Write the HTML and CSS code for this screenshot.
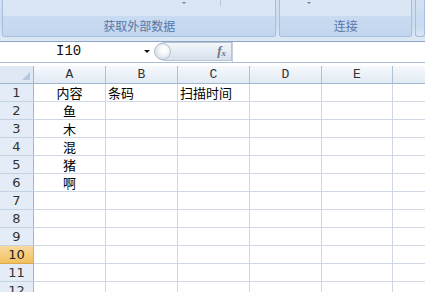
FILE: index.html
```html
<!DOCTYPE html>
<html>
<head>
    <link rel="stylesheet" href="styles.css">
</head>
<body>
    <div class="ribbon">
        <div class="group group-data">
            <div class="group-top">
                <span class="tiny-arrow arrow-1"></span>
                <span class="sep"></span>
            </div>
            <div class="group-label">获取外部数据</div>
        </div>
        <div class="group group-conn">
            <div class="group-top">
                <span class="tiny-arrow arrow-2"></span>
            </div>
            <div class="group-label">连接</div>
        </div>
        <div class="group group-next"></div>
    </div>

    <div class="fbar">
        <div class="namebox">
            <span class="cellref">I10</span>
            <span class="drop"></span>
        </div>
        <div class="fx-btn">
            <span class="knob"></span>
            <span class="fx">f<sub>x</sub></span>
        </div>
        <div class="formula"></div>
    </div>

    <div class="sheet heads">
        <div class="corner"><span class="tri"></span></div>
        <div class="colhead">A</div>
        <div class="colhead">B</div>
        <div class="colhead">C</div>
        <div class="colhead">D</div>
        <div class="colhead">E</div>
        <div class="colhead last"></div>
    </div>
    <div class="sheet rows" id="rows"></div>

    <script>
        // Build the rows of the sheet
        const data = [
            ["内容", "条码", "扫描时间"],
            ["鱼"], ["木"], ["混"], ["猪"], ["啊"]
        ];
        const rows = document.getElementById("rows");
        let html = "";
        for (let r = 1; r <= 12; r++) {
            const vals = data[r - 1] || [];
            html += '<div class="rowhead' + (r === 10 ? ' active' : '') + '">' + r + '</div>';
            for (let c = 0; c < 6; c++) {
                const v = vals[c] || "";
                html += '<div class="cell' + (c === 0 ? ' center' : '') + (c === 5 ? ' last' : '') + '">' + v + '</div>';
            }
        }
        rows.innerHTML = html;
    </script>
</body>
</html>
```

FILE: styles.css
```css
body {
    margin: 0;
    width: 425px;
    height: 292px;
    overflow: hidden;
    background: #fff;
    font-family: "Noto Sans CJK SC", sans-serif;
}

/* Ribbon */
.ribbon {
    height: 42px;
    display: flex;
    gap: 3px;
    padding-left: 2px;
    background: linear-gradient(#d2e0f1, #c9dbf0 60%, #dfe9f5);
    border-bottom: 1px solid #8aa5c6;
    box-sizing: border-box;
}

.group {
    height: 37px;
    display: flex;
    flex-direction: column;
    border: 1px solid #a7bfdc;
    border-top: none;
    border-radius: 0 0 3px 3px;
    box-sizing: border-box;
    overflow: hidden;
}

.group-data { width: 279px; }
.group-conn { width: 135px; }
.group-next { width: 10px; }

.group-top {
    height: 17px;
    position: relative;
    background: #dae6f4;
}

.group-label {
    flex: 1;
    background: linear-gradient(#c9dbf1, #c2d6ef);
    color: #5975a4;
    font-size: 12px;
    line-height: 20px;
    text-align: center;
}

.tiny-arrow {
    position: absolute;
    top: 2px;
    width: 0;
    height: 0;
    border-left: 2px solid transparent;
    border-right: 2px solid transparent;
    border-top: 2px solid #6d7f99;
}

.arrow-1 { left: 179px; }
.arrow-2 { left: 27px; }

.sep {
    position: absolute;
    left: 217px;
    top: 0;
    width: 1px;
    height: 6px;
    background: #b4c7df;
}

/* Formula bar */
.fbar {
    height: 21px;
    display: flex;
    border-bottom: 1px solid #a9bdd6;
    box-sizing: border-box;
    background: #fff;
}

.namebox {
    width: 155px;
    position: relative;
}

.cellref {
    position: absolute;
    left: 56px;
    top: 1px;
    font-family: "Liberation Mono", monospace;
    font-size: 14px;
    color: #111;
}

.drop {
    position: absolute;
    left: 144px;
    top: 8px;
    border-left: 3px solid transparent;
    border-right: 3px solid transparent;
    border-top: 3px solid #111;
}

.fx-btn {
    width: 77px;
    height: 19px;
    position: relative;
    border: 1px solid #b6c4d4;
    border-left: none;
    border-radius: 10px 0 0 10px;
    background: linear-gradient(#f3f6fa, #d7e1ec);
    box-sizing: border-box;
}

.knob {
    position: absolute;
    left: -1px;
    top: 0;
    width: 17px;
    height: 17px;
    border-radius: 50%;
    border: 1px solid #aebdcd;
    background: radial-gradient(circle at 60% 40%, #fdfdfe 20%, #d5dde8 80%);
    box-sizing: border-box;
}

.fx {
    position: absolute;
    right: 5px;
    top: 0;
    font-family: "Liberation Serif", serif;
    font-style: italic;
    font-weight: bold;
    font-size: 13px;
    color: #6a7686;
}

.fx sub {
    font-size: 9px;
    vertical-align: -1px;
}

.formula {
    flex: 1;
    border-left: 1px solid #c5d1de;
}

/* Sheet */
.sheet {
    display: grid;
    grid-template-columns: 34px 72px 72px 72px 72px 71px 1fr;
}

.heads {
    margin-top: 3px;
}

.corner {
    height: 18px;
    position: relative;
    background: #dfe8f5;
    border-right: 1px solid #9eb6ce;
    border-bottom: 1px solid #9eb6ce;
    box-sizing: border-box;
}

.tri {
    position: absolute;
    right: 3px;
    bottom: 3px;
    border-left: 8px solid transparent;
    border-bottom: 8px solid #b6c8de;
}

.colhead {
    height: 18px;
    background: linear-gradient(#f6f9fc, #e2eaf4);
    border-right: 1px solid #aec2d8;
    border-bottom: 1px solid #9eb6ce;
    box-sizing: border-box;
    font-family: "Liberation Mono", monospace;
    font-size: 13px;
    line-height: 17px;
    color: #333;
    text-align: center;
}

.colhead.last, .cell.last {
    border-right: none;
}

.rowhead {
    height: 18px;
    background: #e4ecf7;
    border-right: 1px solid #9eb6ce;
    border-bottom: 1px solid #c5d2e2;
    box-sizing: border-box;
    font-family: "DejaVu Sans", sans-serif;
    font-size: 13px;
    line-height: 18px;
    color: #333;
    text-align: center;
}

.rowhead.active {
    background: linear-gradient(#f9d99f, #f1c15f);
    border-bottom-color: #e0a84a;
    color: #222;
}

.cell {
    height: 18px;
    border-right: 1px solid #d0d7e5;
    border-bottom: 1px solid #d0d7e5;
    box-sizing: border-box;
    padding-left: 2px;
    font-size: 13px;
    line-height: 18px;
    color: #000;
    white-space: nowrap;
}

.cell.center {
    text-align: center;
    padding-left: 0;
}
```
